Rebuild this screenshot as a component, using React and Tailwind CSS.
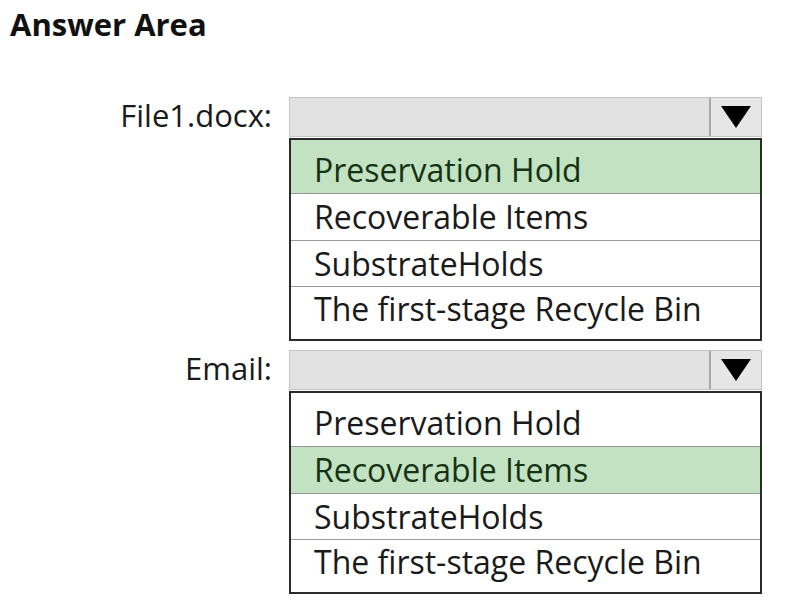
import React from 'react';

const font = { fontFamily: '"Open Sans", "Noto Sans", sans-serif' };

const Dropdown = ({ label, options, selected }) => {
  return (
    <div className="flex flex-col">
      <div className="flex items-start">
        <div className="w-[289px] pr-[17px] text-right text-[31px] leading-[36px] text-[#1a1a1a]">{label}</div>
        <div className="flex h-[40px] w-[473px] border border-[#c4c4c4] bg-[#e2e2e2]">
          <div className="flex-1" />
          <div className="flex w-[52px] items-center justify-center border-l-2 border-[#a8a8a8] bg-[#e6e6e6]">
            <svg width="30" height="22" viewBox="0 0 30 22">
              <polygon points="0,0 30,0 15,22" fill="#000" />
            </svg>
          </div>
        </div>
      </div>
      <div className="ml-[289px] mt-px w-[473px] border-2 border-[#2a2a2a]">
        {options.map((opt, i) => {
          const h = ['h-[53px] pt-[6px]', 'h-[47px] border-t border-[#9a9a9a]', 'h-[46px] border-t border-[#9a9a9a]', 'h-[53px] pb-[8px] border-t border-[#9a9a9a]'][i];
          return (
            <div
              key={opt}
              className={
                'flex items-center pl-[23px] text-[32px] leading-[40px] ' + h + ' ' +
                (opt === selected ? 'bg-[#c3e2c2] text-[#143214]' : 'bg-white text-[#1a1a1a]')
              }
            >
              {opt}
            </div>
          );
        })}
      </div>
    </div>
  );
};

const App = () => {
  const options = ['Preservation Hold', 'Recoverable Items', 'SubstrateHolds', 'The first-stage Recycle Bin'];
  return (
    <div className="min-h-screen w-[806px] bg-white" style={font}>
      <h1 className="pl-[10px] pt-[4px] text-[31px] font-bold leading-[40px] text-[#111]">Answer Area</h1>
      <div className="mt-[53px] flex flex-col gap-[9px]">
        <Dropdown label="File1.docx:" options={options} selected="Preservation Hold" />
        <Dropdown label="Email:" options={options} selected="Recoverable Items" />
      </div>
    </div>
  );
};

export default App;
